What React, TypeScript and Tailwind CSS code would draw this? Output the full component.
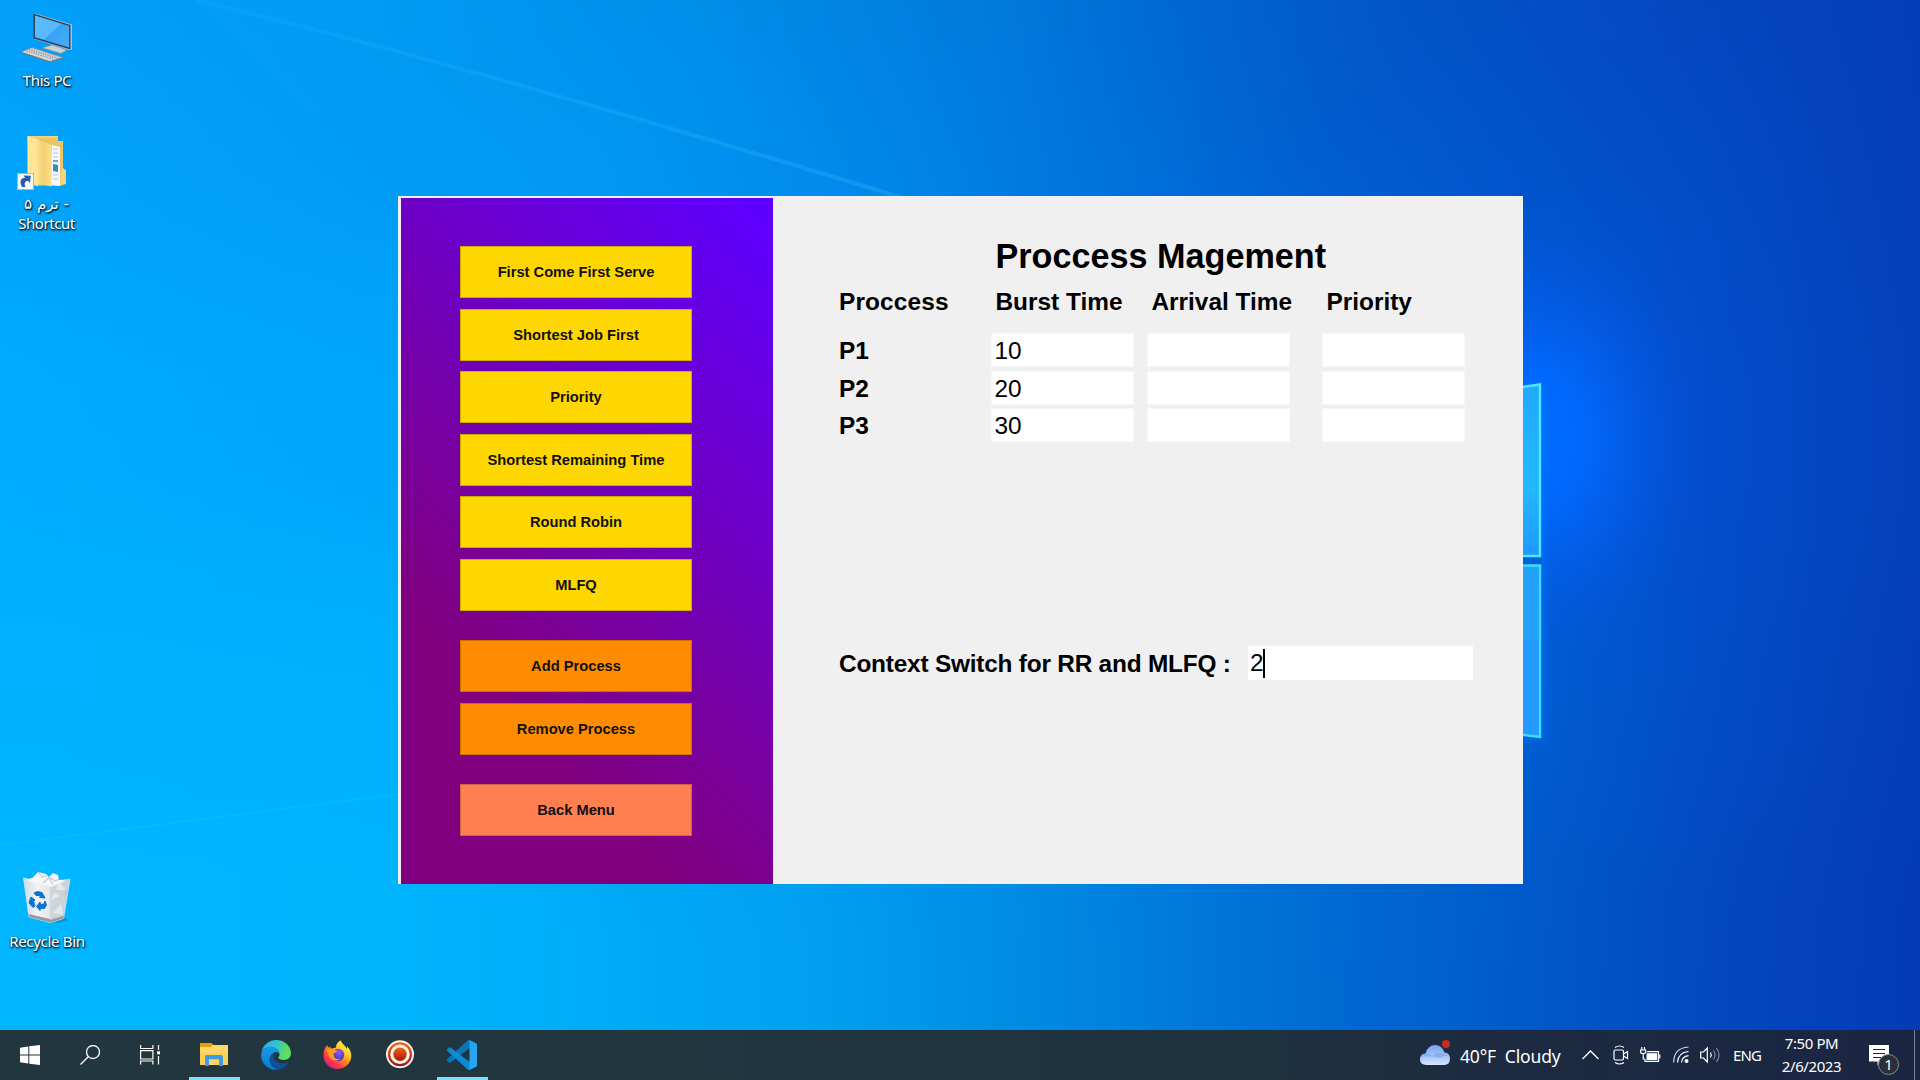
import React from "react";

const wallpaperRows: { y: number; h: number; stops: [number, string][] }[] = [
  { y: -200, h: 290, stops: [[0, "#009ffa"], [400, "#009af3"], [700, "#008dea"], [1000, "#0079dc"], [1200, "#0065d0"], [1400, "#0353c7"], [1600, "#044ac4"], [1920, "#033eb8"]] },
  { y: 90, h: 190, stops: [[0, "#00a4fb"], [600, "#0097f3"], [900, "#0086e8"], [1100, "#0073dc"], [1300, "#0060d1"], [1500, "#0155cd"], [1700, "#034bc6"], [1920, "#033fb9"]] },
  { y: 280, h: 300, stops: [[0, "#00abff"], [390, "#00a6fc"], [1500, "#005bdc"], [1600, "#0355d6"], [1700, "#044dcd"], [1920, "#0341bb"]] },
  { y: 580, h: 230, stops: [[0, "#00b3ff"], [390, "#00b1fd"], [1530, "#005dd2"], [1700, "#034dc8"], [1920, "#033eb8"]] },
  { y: 810, h: 470, stops: [[0, "#00b6ff"], [400, "#00b5fd"], [800, "#00a2f1"], [1000, "#008ee5"], [1200, "#0078da"], [1350, "#0068d2"], [1500, "#005ccb"], [1700, "#0349c1"], [1920, "#033bb5"]] },
];

function Wallpaper() {
  return (
    <svg className="absolute inset-0" width="1920" height="1080" viewBox="0 0 1920 1080">
      <defs>
        <filter id="soft" filterUnits="userSpaceOnUse" x="-200" y="-200" width="2320" height="1480" colorInterpolationFilters="sRGB">
          <feGaussianBlur stdDeviation="0 70" />
        </filter>
        <filter id="edge" x="-20%" y="-20%" width="140%" height="140%">
          <feGaussianBlur stdDeviation="5" />
        </filter>
        {wallpaperRows.map((r, i) => (
          <linearGradient key={i} id={`row${i}`} gradientUnits="userSpaceOnUse" x1="0" x2="1920" y1="0" y2="0">
            {r.stops.map(([x, c]) => (
              <stop key={x} offset={x / 1920} stopColor={c} />
            ))}
          </linearGradient>
        ))}
        <radialGradient id="glow">
          <stop offset="0" stopColor="#006eff" />
          <stop offset="0.3" stopColor="#0169ff" stopOpacity="0.88" />
          <stop offset="0.5" stopColor="#0364f6" stopOpacity="0.6" />
          <stop offset="0.75" stopColor="#045dea" stopOpacity="0.22" />
          <stop offset="1" stopColor="#0459e0" stopOpacity="0" />
        </radialGradient>
        <linearGradient id="pane" x1="0" x2="0" y1="0" y2="1">
          <stop offset="0" stopColor="#20aaff" />
          <stop offset="0.6" stopColor="#24b8ff" />
          <stop offset="1" stopColor="#2098ff" />
        </linearGradient>
        <linearGradient id="ray" x1="0" x2="1" y1="0" y2="1">
          <stop offset="0" stopColor="#40c0ff" stopOpacity="0.1" />
          <stop offset="1" stopColor="#30b0ff" stopOpacity="0.35" />
        </linearGradient>
      </defs>
      <g filter="url(#soft)">
        {wallpaperRows.map((r, i) => (
          <rect key={i} x="0" y={r.y} width="1920" height={r.h} fill={`url(#row${i})`} />
        ))}
      </g>
      <path d="M195 0 Q 450 60 910 200 L400 200 Z" fill="#10a8ff" opacity="0.06" />
      <path d="M195 0 Q 450 60 910 200" stroke="url(#ray)" strokeWidth="4" fill="none" />
      <path d="M0 845 L400 794 L400 1030 L0 1030 Z" fill="#10c4ff" opacity="0.05" />
      <path d="M0 845 L400 794" stroke="#30c8ff" strokeOpacity="0.2" strokeWidth="2" />
      <ellipse cx="1535" cy="440" rx="175" ry="235" fill="url(#glow)" />
      <path d="M1500 390 L1541 384 V557 H1500Z M1500 565 H1541 V738 L1500 732Z" fill="#0a80ff" stroke="#0076ff" strokeWidth="7" filter="url(#edge)" opacity="0.55" />
      <path d="M1500 557 H1541 V565 H1500Z" fill="#005fd8" />
      <path d="M1500 390 L1540 384.500 V556 H1500Z" fill="url(#pane)" stroke="#4ceaff" strokeWidth="2.400" />
      <path d="M1500 565.500 H1540 V737 L1500 732Z" fill="#2499ff" stroke="#3edcff" strokeWidth="2.400" />
      <path d="M1500 567 H1538.500 V640 L1500 644Z" fill="#22a6fa" opacity="0.75" />
    </svg>
  );
}

function PcIcon() {
  return (
    <svg width="54" height="52" viewBox="0 0 54 52">
      <defs>
        <linearGradient id="scr" x1="0" x2="1" y1="0" y2="1">
          <stop offset="0" stopColor="#5dbcfb" />
          <stop offset="0.5" stopColor="#58b8fa" />
          <stop offset="0.52" stopColor="#38a3f6" />
          <stop offset="1" stopColor="#46acf8" />
        </linearGradient>
      </defs>
      <path d="M32 33 L40 35.500 L47 38 L41 41.500 L26 37 L22 36 Z" fill="#c9d2d8" stroke="#7d8b94" strokeWidth="0.600" />
      <path d="M14 1 L52 12.500 V38 L49 38 L14 27 Z" fill="#b7bfc4" />
      <path d="M13.500 1.500 L50.500 13 V37.500 L13.500 26.500 Z" fill="#26445c" />
      <path d="M15 3.500 L49.200 14 V35.500 L15 25.200 Z" fill="url(#scr)" />
      <path d="M12 35.500 L43 45.500 L30 49.600 L1 40 Z" fill="#d7dadb" stroke="#7d868b" strokeWidth="0.700" />
      <path d="M1 40.500 L30 50 L43 46" fill="none" stroke="#6d777d" />
      <path d="M9 37.500 L38 46.500 M6.500 38.800 L34.500 47.500" stroke="#8e989e" strokeWidth="1.300" strokeDasharray="1.400 1" />
      <path d="M12 36.600 L40 45.500" stroke="#a8b0b4" strokeWidth="1.100" strokeDasharray="1.400 1" />
    </svg>
  );
}

function FolderIcon() {
  return (
    <svg width="52" height="56" viewBox="0 0 52 56">
      <defs>
        <linearGradient id="fld" x1="0" x2="1">
          <stop offset="0" stopColor="#ffe79a" />
          <stop offset="0.5" stopColor="#f3d070" />
          <stop offset="1" stopColor="#fddf88" />
        </linearGradient>
      </defs>
      <path d="M10.500 1 H41 V6 H46 V33 L49 36 V49 L44 50.500 H12 Z" fill="#f3d27a" />
      <path d="M14 3 H41 V6.500 H45.500 V49 H30Z" fill="#e9c467" />
      <path d="M35 10 L43 12 V51 L33 50Z" fill="#f6f7f8" />
      <path d="M36 14h5M36 18h5M36 22h5M36 40h5M36 44h5" stroke="#b4c9d8" />
      <path d="M36 25h5v2h-5z" fill="#5fa9dc" />
      <path d="M36 29l5 1v7l-5-1z" fill="#3e87bb" />
      <path d="M45.500 33 L49 35.500 V48 L45 49.500 L43.500 51 V40Z" fill="#f6d67c" />
      <path d="M10.500 1 L21 4.500 V51.500 L10.500 46Z" fill="#ffe596" />
      <path d="M18 4 L34.500 9.500 V51.500 L21 48.500 V38Z" fill="url(#fld)" />
      <rect x="0.500" y="38.500" width="16" height="16" fill="#f7f7f7" stroke="#b7b7b7" />
      <path d="M5 52 C2 46 4 42.500 8.200 43 L6.500 40.500 L13.800 40.800 L13 48 L10.800 45.800 C7.500 46.500 7 49 8.500 52Z" fill="#2b5ba7" />
    </svg>
  );
}

function BinIcon() {
  return (
    <svg width="50" height="54" viewBox="0 0 50 54">
      <defs>
        <linearGradient id="bin" x1="0" x2="1">
          <stop offset="0" stopColor="#cfdde6" />
          <stop offset="0.3" stopColor="#f0f2f4" />
          <stop offset="0.55" stopColor="#e5e8eb" />
          <stop offset="1" stopColor="#b7c6d0" />
        </linearGradient>
      </defs>
      <path d="M32 52 L44 48 L46 50 L36 53Z" fill="#226a95" opacity="0.5" />
      <path d="M1.500 8 L28 14 L48 9 L41.500 48.500 L28 52.500 L7 47 Z" fill="url(#bin)" stroke="#d5e9f4" strokeWidth="0.800" />
      <path d="M7 47 L28 52.500 L41.500 48.500 L42 45.500 L28 49 L6.500 44Z" fill="#9b9a9b" />
      <path d="M28 14 V50 L41 46 L44 28 L38 24 L46 18 L48 9Z" fill="#cdd3d8" opacity="0.85" />
      <path d="M29 30 L38 26 L33 22Z M31 43 L39 34 L41 44Z M37 12 L44 20 L34 20Z" fill="#f0f1f3" opacity="0.7" />
      <path d="M4 10 L11 7.500 L16 2 L24 4 L27 7 L31 3 L36 5 L37 10 L44 9.500 L41 12 L29 17 L20 14 L12 13Z" fill="#f5f6f7" />
      <path d="M16 2 L20 7 L25 6 M27 7 L33 11 L37 9 M21 13 L27 8 L31 15" stroke="#c7cbd0" strokeWidth="1.200" fill="none" />
      <path d="M12 23 L15.500 21.500 L20 22.500 L22 26 L23 28 L17.500 27.500 L18.500 25.500 L14 25.500Z M9 27 L13 30 L11.500 31 L13 36 L11 37.500 L7 33 L8 29.500Z M14.500 36.500 L18 32 L18.500 34.500 L22 34 L23 31 L24.500 35 L22.500 38.500 L18.500 38.500 L18 40.500Z" fill="#0a74d1" stroke="#0a74d1" strokeWidth="1" />
    </svg>
  );
}

const labelClass =
  "text-[15px] leading-[19px] text-white text-center whitespace-nowrap [text-shadow:1px_1px_2px_#000,0_1px_2px_rgba(0,0,0,0.7)]";

const algorithms = ["First Come First Serve", "Shortest Job First", "Priority", "Shortest Remaining Time", "Round Robin", "MLFQ"];

function PanelButton({ label, color }: { label: string; color: string }) {
  return (
    <button className={`block h-[52px] w-[232px] border border-black/20 pt-px text-[14.7px] font-bold text-[#111] ${color}`}>
      {label}
    </button>
  );
}

function SchedulerWindow() {
  const processes = [
    { name: "P1", burst: "10" },
    { name: "P2", burst: "20" },
    { name: "P3", burst: "30" },
  ];
  const cell = "h-[34px] w-[143px] border border-[#f7f7f7] bg-white pl-[2px] leading-[34px] font-normal";
  return (
    <div className="absolute left-[398px] top-[196px] flex h-[688px] w-[1125px] bg-[#f0f0f0] pl-[2.500px] pt-[2px] font-['Liberation_Sans',sans-serif] text-black">
      <div className="flex w-[372.500px] shrink-0 flex-col items-start bg-[linear-gradient(45deg,#800080_27%,#5f00ff_97%)] pl-[59.500px] pt-[48px]">
        <div className="flex flex-col gap-[10.500px]">
          {algorithms.map((a) => (
            <PanelButton key={a} label={a} color="bg-[#ffd700]" />
          ))}
        </div>
        <div className="mt-[29.500px] flex flex-col gap-[10.500px]">
          <PanelButton label="Add Process" color="bg-[#ff8c00]" />
          <PanelButton label="Remove Process" color="bg-[#ff8c00]" />
        </div>
        <div className="mt-[29px]">
          <PanelButton label="Back Menu" color="bg-[#ff7f50]" />
        </div>
      </div>
      <div className="flex flex-1 flex-col pl-[66px] pt-[38px] text-[24.400px] font-bold whitespace-nowrap">
        <h1 className="ml-[156.500px] text-[34.200px] leading-[40px]">Proccess Magement</h1>
        <div className="mt-[11px] grid grid-cols-[156.500px_156px_175px_143px] leading-[30px]">
          <span className="tracking-[0.150px]">Proccess</span>
          <span>Burst Time</span>
          <span>Arrival Time</span>
          <span>Priority</span>
        </div>
        <div className="mt-[16px] flex flex-col gap-[3.500px]">
          {processes.map((p) => (
            <div key={p.name} className="grid h-[34px] grid-cols-[152.400px_156px_175px_143px] leading-[36px]">
              <span>{p.name}</span>
              <div className={cell}>{p.burst}</div>
              <div className={cell} />
              <div className={cell} />
            </div>
          ))}
        </div>
        <div className="mt-[204px] flex h-[34px] leading-[36px]">
          <span className="w-[409px] tracking-[-0.210px]">Context Switch for RR and MLFQ :</span>
          <div className="flex h-[34px] w-[225px] items-center bg-white pl-[2px] font-normal">
            <span>2</span>
            <span className="-ml-px h-[29px] w-[2px] bg-black" />
          </div>
        </div>
      </div>
    </div>
  );
}

function EdgeIcon() {
  return (
    <svg width="30" height="30" viewBox="0 0 30 30">
      <defs>
        <linearGradient id="e1" x1="0" x2="1" y1="0" y2="0.300">
          <stop offset="0" stopColor="#31a8e8" />
          <stop offset="0.5" stopColor="#2bc3d2" />
          <stop offset="0.9" stopColor="#5bdc62" />
        </linearGradient>
        <linearGradient id="e2" x1="0" x2="0" y1="0" y2="1">
          <stop offset="0" stopColor="#1c9be4" />
          <stop offset="1" stopColor="#0a78d6" />
        </linearGradient>
      </defs>
      <path d="M0.400 13 C1.500 5.500 7.500 0 15 0 C24 0 30 6.500 30 13.300 C30 17.500 27 20 23 20 C19.500 20 17.300 18.800 17.300 17.700 C17.300 17 18.500 16.700 18.500 14.500 C18.500 11 15.500 7 10 7 C5 7 1.500 9.500 .4 13Z" fill="url(#e1)" />
      <path d="M.2 15.500 C.2 11 4 6.800 10 6.800 C15 6.800 18.500 10.500 18.500 14.300 C17.800 12.600 16 11.800 14.500 12 C11 13 9 16.500 9.700 20.500 C10.400 24.500 13.500 28 18.500 29 C9.500 32 .2 25 .2 15.500Z" fill="url(#e2)" />
      <path d="M12.600 12.800 C9 15 7.500 19 9 23 C10.500 27 14.500 29.800 18.300 29.300 C22.500 28.500 25.500 26 27.300 23 C27.600 22.300 27.200 22 26.500 22.300 C20.500 25 12.500 22 12.300 16 C12.200 14.800 12.200 13.800 12.600 12.800Z" fill="#0f4f98" />
    </svg>
  );
}

function FirefoxIcon() {
  return (
    <svg width="29" height="30" viewBox="0 0 29 30">
      <defs>
        <linearGradient id="f1" x1="0.850" x2="0.200" y1="0.100" y2="0.950">
          <stop offset="0" stopColor="#fff44f" />
          <stop offset="0.3" stopColor="#ffc82e" />
          <stop offset="0.5" stopColor="#ff8a16" />
          <stop offset="0.75" stopColor="#ff3c48" />
          <stop offset="1" stopColor="#e31587" />
        </linearGradient>
        <radialGradient id="f2" cx="0.600" cy="0.300">
          <stop offset="0" stopColor="#9059ff" />
          <stop offset="1" stopColor="#5b3bc0" />
        </radialGradient>
      </defs>
      <path d="M18 0.500 C18 3 22.500 5.500 24 9 C24.500 7 24 6 24 6 C27 9 28.500 13 28.300 16.500 C27.700 24 21.500 29 14.500 29 C6.500 29 .5 23 .5 15.500 C.5 11 2 7.500 4.500 5 L5 8 C6 7 7 6.800 7 6.800 L8 8.800 L13 7.500 C13 3.500 16 1 18 .5Z" fill="url(#f1)" />
      <circle cx="15" cy="15" r="6.200" fill="url(#f2)" />
      <path d="M3.500 10 C7 8 9.500 8.500 11 10 L14.500 10.500 C14 12.500 11 12.800 10.500 13.500 C10.500 18 13 20 17 18.500 C14.500 22 7.500 21 5.500 15 Z" fill="#ff9a1c" />
      <path d="M17 8 C21 8.500 23 12 22.500 16 C25 13 23 8 20 6.500Z" fill="#ffd437" />
    </svg>
  );
}

function VsCodeIcon() {
  return (
    <svg width="30" height="30" viewBox="0 0 100 100">
      <path d="M96.500 10.700 75.900.8a6.200 6.200 0 0 0-7.100 1.200L1.300 63.600a4.200 4.200 0 0 0 0 6.200l5.500 5a4.200 4.200 0 0 0 5.300.2L93.400 13.400a4.100 4.100 0 0 1 6.600 3.300v-.3a6.300 6.300 0 0 0-3.500-5.700z" fill="#0877b9" />
      <path d="M96.500 89.300 75.900 99.200a6.200 6.200 0 0 1-7.100-1.200L1.300 36.400a4.200 4.200 0 0 1 0-6.200l5.500-5a4.200 4.200 0 0 1 5.300-.2l81.300 61.600a4.100 4.100 0 0 0 6.600-3.300v.3a6.300 6.300 0 0 1-3.500 5.700z" fill="#0b8bd5" />
      <path d="M75.900 99.200a6.200 6.200 0 0 1-7.100-1.200c2.300 2.300 6.200.7 6.200-2.600V4.600c0-3.300-3.900-4.900-6.200-2.600a6.200 6.200 0 0 1 7.100-1.200l20.600 9.900a6.300 6.300 0 0 1 3.500 5.700v67.200a6.300 6.300 0 0 1-3.500 5.700z" fill="#27a4f2" />
    </svg>
  );
}

function RecorderIcon() {
  return (
    <svg width="30" height="30" viewBox="0 0 30 30">
      <defs>
        <linearGradient id="rec" x1="0" x2="0" y1="0" y2="1">
          <stop offset="0" stopColor="#f0640a" />
          <stop offset="1" stopColor="#a81410" />
        </linearGradient>
      </defs>
      <circle cx="15" cy="15.500" r="14.300" fill="#14232a" opacity="0.6" />
      <circle cx="15" cy="14.300" r="14" fill="#fbf3f0" />
      <circle cx="15" cy="14.300" r="10.900" fill="none" stroke="url(#rec)" strokeWidth="2.200" />
      <circle cx="15" cy="14.300" r="6.700" fill="url(#rec)" />
    </svg>
  );
}

function ExplorerIcon() {
  return (
    <svg width="28" height="23" viewBox="0 0 28 23">
      <path d="M0 1 Q0 0 1 0 H11 L13 2 H27 Q28 2 28 3 V22 H0Z" fill="#fccf56" />
      <path d="M0 1 Q0 0 1 0 H11 L13 1.500 L11 4 H0Z" fill="#e0a00d" />
      <path d="M0 4 H11 L13.500 2 H28 V10 H0Z" fill="#ffd766" />
      <path d="M5 23 V14 Q5 12 7 12 H21 Q23 12 23 14 V23 H19 V16.500 H9 V23Z" fill="#3f9be0" />
      <path d="M9 16.500H19V22H9Z" fill="#fbd468" />
    </svg>
  );
}

function TaskButton({ children, active, width = "w-[51px]" }: { children: React.ReactNode; active?: boolean; width?: string }) {
  return (
    <div className={`flex h-[50px] shrink-0 items-center justify-center border-b-[3px] pt-[3px] ${width} ${active ? "border-[#76e3ff]" : "border-transparent"}`}>
      {children}
    </div>
  );
}

function Taskbar() {
  return (
    <div className="absolute bottom-0 left-0 flex h-[50px] w-[1920px] bg-[linear-gradient(90deg,#21363f_0%,#21363f_35%,#1f323f_65%,#1c2b40_78%,#1a2543_100%)] font-['Noto_Sans',sans-serif] text-white">
      <TaskButton width="w-[60px]">
        <svg width="20" height="20" viewBox="0 0 20 20" fill="#fff">
          <path d="M0 2.800 8.300 1.500V9.400H0Z M9.300 1.300 20 0V9.400H9.300Z M0 10.400H8.300V18.500L0 17.300Z M9.300 10.400H20V20L9.300 18.700Z" />
        </svg>
      </TaskButton>
      <TaskButton width="w-[60px]">
        <svg width="20" height="20" viewBox="0 0 20 20" fill="none" stroke="#fff" strokeWidth="1.300">
          <circle cx="13" cy="7" r="6.500" />
          <path d="M8.500 11.500 .5 19.500" />
        </svg>
      </TaskButton>
      <TaskButton width="w-[60px]">
        <svg width="20" height="20" viewBox="0 0 20 20" fill="none" stroke="#fff" strokeWidth="1.200">
          <path d="M.6 0V3.500H12.900V0 M.6 19.500V16H12.900V19.500 M.6 5.600H12.900V14H.6Z M18.500 0V5 M18.500 11V19.500" />
          <path d="M17 6.300h3v3h-3z" fill="#fff" stroke="none" />
        </svg>
      </TaskButton>
      <div className="flex pl-[9px]">
        <TaskButton active>
          <span className="-mt-px -ml-px pr-px"><ExplorerIcon /></span>
        </TaskButton>
        <div className="flex pl-[10px]"><TaskButton><EdgeIcon /></TaskButton></div>
        <div className="flex pl-[11px]"><TaskButton><FirefoxIcon /></TaskButton></div>
        <div className="flex pl-[11px]"><TaskButton><RecorderIcon /></TaskButton></div>
        <div className="flex pl-[12px]"><TaskButton active><span className="pr-px"><VsCodeIcon /></span></TaskButton></div>
      </div>

      <div className="ml-auto flex h-full items-center">
        <svg className="mt-[-4px]" width="32" height="28" viewBox="0 0 32 28">
          <defs>
            <linearGradient id="cl" x1="0" x2="0" y1="0" y2="1">
              <stop offset="0" stopColor="#78a4f0" />
              <stop offset="0.6" stopColor="#a9c6f8" />
              <stop offset="1" stopColor="#d8e6ff" />
            </linearGradient>
          </defs>
          <path d="M6.500 26 Q0 26 0 20.300 Q0 15 5.500 14.500 Q8 6 15 6 Q22 6 24.500 13.500 Q30 14 30 19.800 Q30 26 24 26Z" fill="url(#cl)" />
          <path d="M1 18 Q5 12 12 17 Q20 11 29 17 Q24 16 20 19 Q10 16 1 18Z" fill="#6c98e8" opacity="0.5" />
          <circle cx="26" cy="5" r="4" fill="#cb2a1d" />
        </svg>
        <span className="ml-[8px] mt-[2px] w-[122px] text-[17.500px] leading-6 tracking-[-0.150px] whitespace-pre">40°F  Cloudy</span>
        <svg className="mt-[-1px]" width="17" height="10" viewBox="0 0 17 10" fill="none" stroke="#fff" strokeWidth="1.300">
          <path d="M.5 9 8.500 1 16.500 9" />
        </svg>
        <svg className="ml-[14px]" width="16" height="20" viewBox="0 0 16 20" fill="none" stroke="#fff" strokeWidth="1.200">
          <path d="M2 2.500Q6.500-.5 11 2.500 M2 17.500Q6.500 20.500 11 17.500" />
          <rect x="1" y="5" width="9.500" height="10" rx="1.500" />
          <path d="M10.500 9 14.500 6.500V13.500L10.500 11" />
        </svg>
        <svg className="ml-[11px]" width="21" height="16" viewBox="0 0 21 16" fill="none" stroke="#fff" strokeWidth="1.200">
          <path d="M7 4.600H18.500V14.400H5V12" />
          <path d="M6.500 6.200H17.200V13H6.500Z" fill="#fff" stroke="none" />
          <path d="M19.800 7.500V11.500 M1.800 0V3 M4.500 0V3 M.6 3H5.600V5Q5.600 6.500 3.200 6.500Q.6 6.500 .6 5Z M3.200 6.500V12H5" />
        </svg>
        <svg className="ml-[12px]" width="17" height="18" viewBox="0 0 17 18" fill="none" stroke="#fff" strokeWidth="1.200">
          <path d="M.7 16.500Q.7 2 15.500 1" strokeOpacity="0.800" />
          <path d="M4.500 16.500Q5 6.500 15.500 5.500 M8.500 16.500Q9 10.500 15.500 9.700" />
          <circle cx="13.500" cy="15" r="2" fill="#fff" stroke="none" />
        </svg>
        <svg className="ml-[10px]" width="21" height="18" viewBox="0 0 21 18" fill="none" stroke="#fff" strokeWidth="1.200">
          <path d="M.7 6H3.500L7.300 2V16L3.500 12H.7Z M10.500 6.500Q12 9 10.500 11.500" />
          <path d="M13.500 4.500Q16.500 9 13.500 13.500 M16.500 2Q21.500 9 16.500 16" strokeOpacity="0.450" />
        </svg>
        <span className="ml-[12px] w-[40px] text-[15px] tracking-[-0.900px]">ENG</span>
        <div className="-mt-px flex w-[77px] flex-col items-center text-[15px] leading-[23px] tracking-[-0.400px] whitespace-nowrap">
          <span>7:50 PM</span>
          <span>2/6/2023</span>
        </div>
        <svg className="ml-[19px] mt-[10px]" width="31" height="31" viewBox="0 0 31 31">
          <path d="M0 0H20V16.500H13L8.500 20.500V16.500H0Z" fill="#fff" />
          <path d="M4 4.500H16 M4 8.500H16 M4 12.500H12" stroke="#1b2842" strokeWidth="1.200" />
          <circle cx="19.500" cy="19.500" r="10" fill="#2b2f38" stroke="#85898f" />
          <text x="19.500" y="25" textAnchor="middle" fontSize="15" fill="#fff">1</text>
        </svg>
        <div className="ml-[14px] mr-[5px] h-full w-px bg-[#7b8393]" />
      </div>
    </div>
  );
}

export default function App() {
  return (
    <div className="relative h-[1080px] w-[1920px] overflow-hidden bg-[#0080e8] font-['Noto_Sans',sans-serif]">
      <Wallpaper />
      <div className="absolute left-0 top-[12px] flex w-[94px] flex-col items-center">
        <PcIcon />
        <span className={`mt-[7px] tracking-[-0.400px] ${labelClass}`}>This PC</span>
      </div>
      <div className="absolute left-0 top-[135px] flex w-[93px] flex-col items-center">
        <span className="-ml-[8px]"><FolderIcon /></span>
        <span className={`mt-[4px] font-['DejaVu_Sans',sans-serif] ${labelClass}`}>ترم ۵ -</span>
        <span className={`tracking-[-0.450px] ${labelClass}`}>Shortcut</span>
      </div>
      <div className="absolute left-0 top-[870px] flex w-[94px] flex-col items-center">
        <BinIcon />
        <span className={`mt-[8px] tracking-[-0.300px] ${labelClass}`}>Recycle Bin</span>
      </div>
      <SchedulerWindow />
      <Taskbar />
    </div>
  );
}
